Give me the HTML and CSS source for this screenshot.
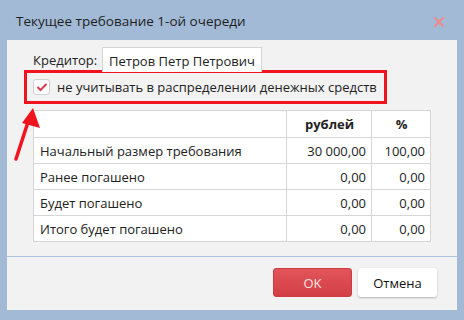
FILE: index.html
```html
<!DOCTYPE html>
<html lang="ru">
<head>
    <meta charset="UTF-8">
    <title>Текущее требование 1-ой очереди</title>
    <link rel="stylesheet" href="styles.css">
</head>
<body>
    <div class="window">
        <div class="titlebar">
            <span class="title">Текущее требование 1-ой очереди</span>
            <svg class="close" width="12" height="12" viewBox="0 0 12 12">
                <path d="M1.5 1.5 L10.5 10.5 M10.5 1.5 L1.5 10.5" stroke="#ef8a8a" stroke-width="2" fill="none"/>
            </svg>
        </div>

        <div class="panel">
            <div class="content">
                <div class="creditor">
                    <span class="label">Кредитор:</span>
                    <span class="field">Петров Петр Петрович</span>
                </div>

                <label class="check-row">
                    <span class="checkbox">
                        <svg width="12" height="10" viewBox="0 0 12 10">
                            <path d="M1.5 5 L4.5 8 L10.5 2" stroke="#cf3f4c" stroke-width="2" fill="none"/>
                        </svg>
                    </span>
                    не учитывать в распределении денежных средств
                </label>

                <table class="amounts">
                    <thead>
                        <tr>
                            <th class="c-name"></th>
                            <th class="c-rub">рублей</th>
                            <th class="c-pct">%</th>
                        </tr>
                    </thead>
                    <tbody>
                        <tr>
                            <td>Начальный размер требования</td>
                            <td class="num">30 000,00</td>
                            <td class="num">100,00</td>
                        </tr>
                        <tr>
                            <td>Ранее погашено</td>
                            <td class="num">0,00</td>
                            <td class="num">0,00</td>
                        </tr>
                        <tr>
                            <td>Будет погашено</td>
                            <td class="num">0,00</td>
                            <td class="num">0,00</td>
                        </tr>
                        <tr>
                            <td>Итого будет погашено</td>
                            <td class="num">0,00</td>
                            <td class="num">0,00</td>
                        </tr>
                    </tbody>
                </table>
            </div>

            <div class="footer">
                <button class="btn btn-ok">OK</button>
                <button class="btn btn-cancel">Отмена</button>
            </div>
        </div>

        <!-- annotation arrow -->
        <svg class="arrow" width="40" height="60" viewBox="0 0 40 60">
            <path d="M3 54 L16 14" stroke="#f0141e" stroke-width="3.5" stroke-linecap="round" fill="none"/>
            <path d="M20 3 L27 23 L9 18 Z" fill="#f0141e"/>
        </svg>
    </div>
</body>
</html>
```

FILE: styles.css
```css
body {
    margin: 0;
    background: #a2bad6;
    font-family: "Open Sans", "Noto Sans", Arial, sans-serif;
    color: #222;
}

.window {
    position: relative;
    width: 464px;
    height: 320px;
}

.titlebar {
    height: 40px;
    display: flex;
    align-items: center;
    justify-content: space-between;
    padding: 2px 19px 0 16px;
    box-sizing: border-box;
}

.title {
    font-size: 13.5px;
    color: #1e1e1e;
}

.close {
    margin-top: 1px;
}

.panel {
    margin: 0 7px;
    height: 270px;
    background: #f2f2f2;
    display: flex;
    flex-direction: column;
}

.content {
    height: 216px;
    padding: 7px 26px 0 26px;
    box-sizing: border-box;
    font-size: 13px;
}

.creditor {
    display: flex;
    align-items: center;
    height: 25px;
}

.label {
    width: 69px;
}

.field {
    height: 25px;
    width: 160px;
    box-sizing: border-box;
    padding: 3px 6px 0;
    background: #fff;
    border: 1px solid #d4d4d4;
    border-bottom: none;
    line-height: 20px;
}

.check-row {
    display: flex;
    align-items: center;
    gap: 7px;
    margin: -2px 0 0 -9px;
    width: 363px;
    height: 34px;
    box-sizing: border-box;
    padding: 0 0 0 6px;
    border: 3px solid #f0141e;
}

.checkbox {
    width: 15px;
    height: 14px;
    border: 1px solid #cfcfcf;
    border-radius: 3px;
    background: #fff;
    display: flex;
    align-items: center;
    justify-content: center;
}

.amounts {
    margin-top: 6px;
    width: 398px;
    border-collapse: collapse;
    background: #fff;
    table-layout: fixed;
}

.amounts th,
.amounts td {
    border: 1px solid #d6d6d6;
    padding: 0 5px 0 6px;
    height: 25px;
    font-weight: normal;
    white-space: nowrap;
}

.amounts thead th {
    height: 26px;
    font-weight: bold;
    text-align: center;
}

.amounts .c-name {
    width: 241px;
}

.amounts .c-rub {
    width: 73px;
}

.amounts .num {
    text-align: right;
}

.footer {
    flex: 1;
    border-top: 1px solid #a9c3df;
    display: flex;
    justify-content: flex-end;
    align-items: flex-start;
    gap: 6px;
    padding: 11px 20px 0 0;
}

.btn {
    width: 79px;
    height: 29px;
    border-radius: 3px;
    font-family: inherit;
    font-size: 13px;
    cursor: pointer;
}

.btn-ok {
    background: linear-gradient(#e2545b, #d33e46);
    border: 1px solid #cc3a42;
    color: #fbe3e3;
}

.btn-cancel {
    background: #fff;
    border: none;
    color: #111;
    box-shadow: 0 1px 2px rgba(0, 0, 0, 0.25);
}

.arrow {
    position: absolute;
    left: 13px;
    top: 105px;
}
```
